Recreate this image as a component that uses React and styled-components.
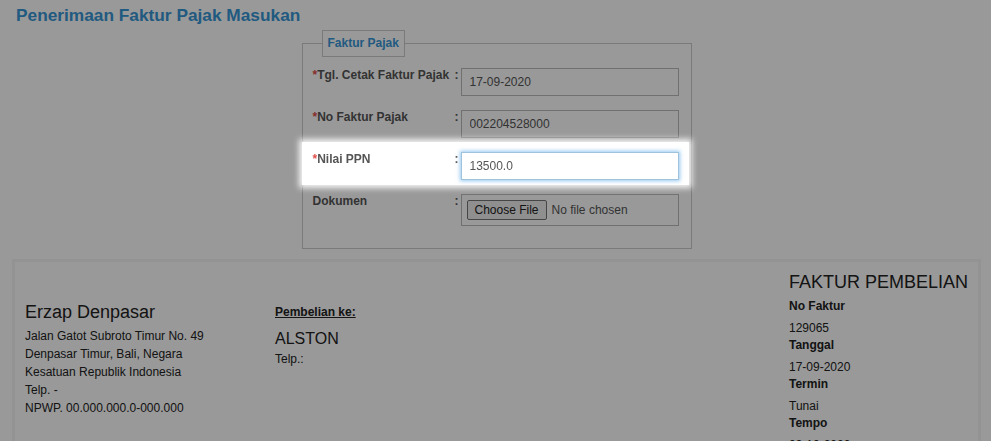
import styled, { createGlobalStyle } from 'styled-components'

/* ---------- STYLE ---------- */

const GlobalStyle = createGlobalStyle`
  html, body {
    margin: 0;
    padding: 0;
    background: #fff;
  }
  body {
    font-family: "Liberation Sans", Arial, sans-serif;
    font-size: 12px;
    color: #333;
  }
`

const Page = styled.div`
  padding: 5px 10px 60px 12px;
`

const Title = styled.h2`
  margin: 0 0 0 4px;
  font-size: 17.3px;
  line-height: 21px;
  font-weight: bold;
  color: #3796d6;
`

const Fieldset = styled.fieldset`
  box-sizing: border-box;
  width: 390px;
  margin: 4px auto 0;
  padding: 6px 6px 22px 4px;
  border: 1px solid #ccc;
  display: flex;
  flex-direction: column;
  gap: 9px;
`

const Legend = styled.legend`
  margin-left: 15px;
  padding: 6px 5px;
  border: 1px solid #ccc;
  font-size: 12px;
  line-height: 13px;
  font-weight: bold;
  color: #3796d6;
`

const Row = styled.div`
  display: grid;
  grid-template-columns: 141px 7px 218px;
  padding: 5px 3px 0 6px;
  ${(p) =>
    p.$active &&
    `
    position: relative;
    z-index: 11;
    &::before {
      content: "";
      position: absolute;
      inset: -5px -4px -5px -5px;
      z-index: -1;
      background: #fff;
      box-shadow: 0 0 6px 3px rgba(255, 255, 255, 0.9);
    }
  `}
`

const Label = styled.label`
  font-weight: bold;
  color: #555;
  line-height: 14px;
  white-space: nowrap;
`

const Required = styled.span`
  color: #e0504b;
`

const Colon = styled.span`
  font-weight: bold;
  color: #555;
  line-height: 14px;
  padding-left: 1px;
`

const Input = styled.input`
  box-sizing: border-box;
  width: 100%;
  height: 28px;
  padding: 0 8px;
  border: 1px solid ${(p) => (p.$focus ? '#9fc3dd' : '#bbb')};
  font-family: inherit;
  font-size: 12px;
  color: #555;
  background: #fff;
  outline: none;
  box-shadow: ${(p) => (p.$focus ? '0 0 4px 1px rgba(102, 175, 233, 0.7)' : 'none')};
`

const FileBox = styled.div`
  box-sizing: border-box;
  height: 32px;
  padding: 5px;
  border: 1px solid #bbb;
  display: flex;
  align-items: center;
  gap: 5px;
`

const FileButton = styled.button`
  height: 20px;
  padding: 0 7px;
  border: 1px solid #767676;
  border-radius: 2px;
  background: #efefef;
  font-family: inherit;
  font-size: 12px;
  color: #222;
`

const FileName = styled.span`
  color: #555;
`

const Panel = styled.div`
  margin-top: 10px;
  border: 3px solid #f5f5f5;
  display: grid;
  grid-template-columns: 250px 514px 1fr;
  padding: 9px 0 40px 10px;
`

const Column = styled.div`
  padding-top: ${(p) => p.$top || 0}px;
`

const Company = styled.div`
  font-size: 18px;
  line-height: 22px;
  color: #222;
`

const Address = styled.div`
  margin-top: 4px;
  line-height: 18px;
  color: #222;
`

const BuyerHead = styled.div`
  font-weight: bold;
  text-decoration: underline;
  line-height: 17px;
  color: #222;
`

const BuyerName = styled.div`
  margin-top: 8px;
  font-size: 16px;
  line-height: 20px;
  color: #222;
`

const BuyerLine = styled.div`
  margin-top: 2px;
  line-height: 17px;
  color: #222;
`

const InvoiceTitle = styled.div`
  font-size: 18px;
  line-height: 22px;
  color: #222;
  margin-bottom: 5px;
`

const Term = styled.div`
  font-weight: bold;
  line-height: 17px;
  color: #222;
`

const Value = styled.div`
  margin-top: 5px;
  line-height: 17px;
  color: #222;
`

const Overlay = styled.div`
  position: fixed;
  inset: 0;
  z-index: 10;
  background: rgba(0, 0, 0, 0.4);
`

/* ---------- JSX ---------- */

const invoice = [
  ['No Faktur', '129065'],
  ['Tanggal', '17-09-2020'],
  ['Termin', 'Tunai'],
  ['Tempo', '03-10-2020'],
]

const App = () => {
  return (
    <>
      <GlobalStyle />
      <Page>
        <Title>Penerimaan Faktur Pajak Masukan</Title>
        <Fieldset>
          <Legend>Faktur Pajak</Legend>
          <Row>
            <Label>
              <Required>*</Required>Tgl. Cetak Faktur Pajak
            </Label>
            <Colon>:</Colon>
            <Input defaultValue="17-09-2020" />
          </Row>
          <Row>
            <Label>
              <Required>*</Required>No Faktur Pajak
            </Label>
            <Colon>:</Colon>
            <Input defaultValue="002204528000" />
          </Row>
          <Row $active>
            <Label>
              <Required>*</Required>Nilai PPN
            </Label>
            <Colon>:</Colon>
            <Input $focus defaultValue="13500.0" />
          </Row>
          <Row>
            <Label>Dokumen</Label>
            <Colon>:</Colon>
            <FileBox>
              <FileButton type="button">Choose File</FileButton>
              <FileName>No file chosen</FileName>
            </FileBox>
          </Row>
        </Fieldset>

        <Panel>
          <Column $top={30}>
            <Company>Erzap Denpasar</Company>
            <Address>
              Jalan Gatot Subroto Timur No. 49
              <br />
              Denpasar Timur, Bali, Negara
              <br />
              Kesatuan Republik Indonesia
              <br />
              Telp. -
              <br />
              NPWP. 00.000.000.0-000.000
            </Address>
          </Column>
          <Column $top={33}>
            <BuyerHead>Pembelian ke:</BuyerHead>
            <BuyerName>ALSTON</BuyerName>
            <BuyerLine>Telp.:</BuyerLine>
          </Column>
          <Column>
            <InvoiceTitle>FAKTUR PEMBELIAN</InvoiceTitle>
            {invoice.map(([term, value]) => (
              <div key={term}>
                <Term>{term}</Term>
                <Value>{value}</Value>
              </div>
            ))}
          </Column>
        </Panel>
      </Page>
      <Overlay />
    </>
  )
}

export default App
